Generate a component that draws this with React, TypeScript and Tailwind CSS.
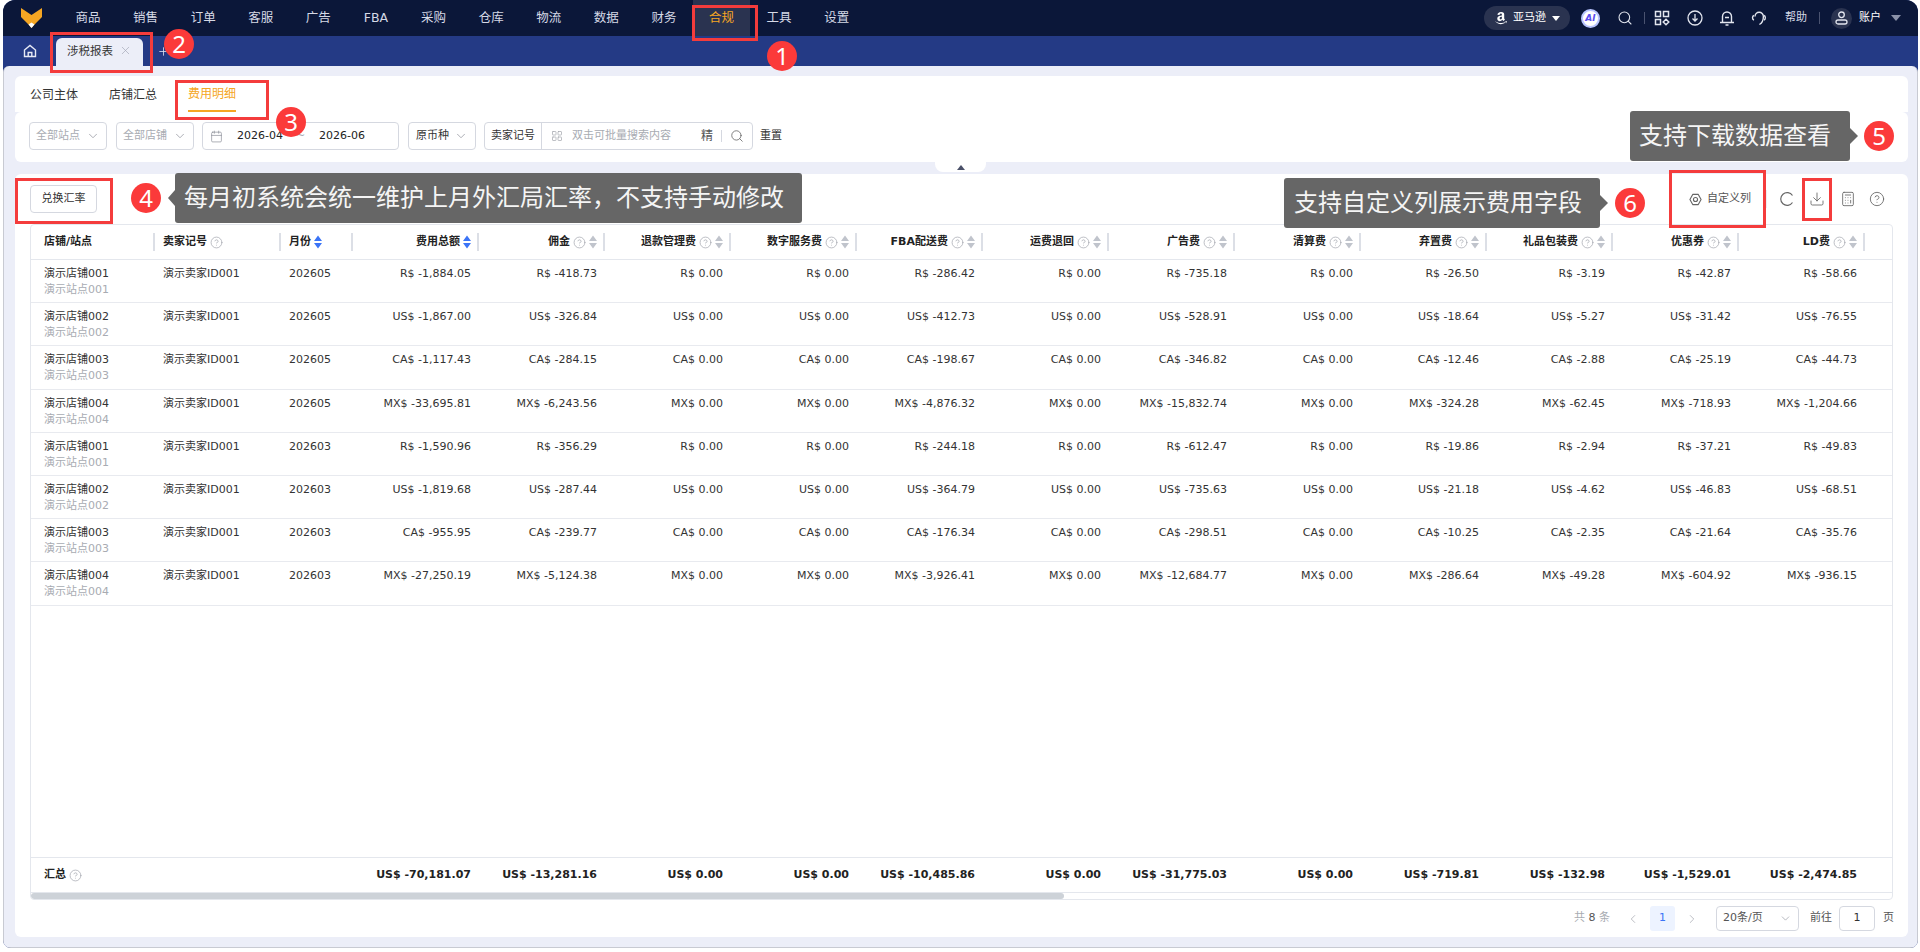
import React from "react";
import { CircleHelp, Download, Calculator, Search, ChevronDown, ChevronLeft, ChevronRight, Calendar, X, Plus, LayoutGrid } from "lucide-react";
import { FaAmazon } from "react-icons/fa";

const navItems = ["商品", "销售", "订单", "客服", "广告", "FBA", "采购", "仓库", "物流", "数据", "财务", "合规", "工具", "设置"];
const headers: [string, boolean][] = [
  ["费用总额", false], ["佣金", true], ["退款管理费", true], ["数字服务费", true], ["FBA配送费", true], ["运费退回", true],
  ["广告费", true], ["清算费", true], ["弃置费", true], ["礼品包装费", true], ["优惠券", true], ["LD费", true],
];
type Row = { store: string; site: string; month: string; cur: string; v: string[] };
const rows: Row[] = [
  { store: "演示店铺001", site: "演示站点001", month: "202605", cur: "R$", v: ["-1,884.05", "-418.73", "0.00", "0.00", "-286.42", "0.00", "-735.18", "0.00", "-26.50", "-3.19", "-42.87", "-58.66"] },
  { store: "演示店铺002", site: "演示站点002", month: "202605", cur: "US$", v: ["-1,867.00", "-326.84", "0.00", "0.00", "-412.73", "0.00", "-528.91", "0.00", "-18.64", "-5.27", "-31.42", "-76.55"] },
  { store: "演示店铺003", site: "演示站点003", month: "202605", cur: "CA$", v: ["-1,117.43", "-284.15", "0.00", "0.00", "-198.67", "0.00", "-346.82", "0.00", "-12.46", "-2.88", "-25.19", "-44.73"] },
  { store: "演示店铺004", site: "演示站点004", month: "202605", cur: "MX$", v: ["-33,695.81", "-6,243.56", "0.00", "0.00", "-4,876.32", "0.00", "-15,832.74", "0.00", "-324.28", "-62.45", "-718.93", "-1,204.66"] },
  { store: "演示店铺001", site: "演示站点001", month: "202603", cur: "R$", v: ["-1,590.96", "-356.29", "0.00", "0.00", "-244.18", "0.00", "-612.47", "0.00", "-19.86", "-2.94", "-37.21", "-49.83"] },
  { store: "演示店铺002", site: "演示站点002", month: "202603", cur: "US$", v: ["-1,819.68", "-287.44", "0.00", "0.00", "-364.79", "0.00", "-735.63", "0.00", "-21.18", "-4.62", "-46.83", "-68.51"] },
  { store: "演示店铺003", site: "演示站点003", month: "202603", cur: "CA$", v: ["-955.95", "-239.77", "0.00", "0.00", "-176.34", "0.00", "-298.51", "0.00", "-10.25", "-2.35", "-21.64", "-35.76"] },
  { store: "演示店铺004", site: "演示站点004", month: "202603", cur: "MX$", v: ["-27,250.19", "-5,124.38", "0.00", "0.00", "-3,926.41", "0.00", "-12,684.77", "0.00", "-286.64", "-49.28", "-604.92", "-936.15"] },
];
const totals = ["-70,181.07", "-13,281.16", "0.00", "0.00", "-10,485.86", "0.00", "-31,775.03", "0.00", "-719.81", "-132.98", "-1,529.01", "-2,474.85"];

function Sort({ active }: { active?: boolean }) {
  const c = active ? "#3b74f6" : "#c0c4cc";
  return (
    <svg width="8" height="14" viewBox="0 0 8 14" className="shrink-0">
      <path d="M4 0.5 L8 6 H0 Z M4 13.5 L0 8 H8 Z" fill={c} />
    </svg>
  );
}
function Q({ size = 13 }: { size?: number }) {
  return <CircleHelp size={size} strokeWidth={1.4} className="shrink-0 text-[#a8abb2]" />;
}
function Fox() {
  return (
    <svg width="21" height="20" viewBox="0 0 21 20">
      <path d="M0 0 L10.5 7 L21 0 V9 L14 16 L10.5 20 L7 16 L0 9 Z" fill="#f5a623" />
      <path d="M7.5 16.5 L10.5 14.5 L13.5 16.5 L10.5 20 Z" fill="#ffffff" />
    </svg>
  );
}
function Badge({ n, className }: { n: number; className: string }) {
  return (
    <div className={"absolute flex h-[30px] w-[30px] items-center justify-center rounded-full bg-[#fb3a3a] font-['Noto_Sans'] text-[24px] leading-none text-white " + className}>{n}</div>
  );
}

export default function App() {
  return (
    <div
      className="relative h-[952px] w-[1920px] overflow-hidden bg-white pb-[4px] pl-[3px] pr-[2px] text-[11px] text-[#333]"
      style={{ fontFamily: '"DejaVu Sans", "Noto Sans CJK SC", sans-serif' }}
    >
      <div className="flex h-full flex-col overflow-hidden rounded-b-[8px] rounded-t-[12px] bg-[#243a85]">
        {/* nav */}
        <div className="flex h-9 shrink-0 items-center bg-[#0b1739] text-[12.5px] text-[#d5d9e6]">
          <div className="ml-[18px] mr-[17.2px] flex w-[21px] items-center"><Fox /></div>
          {navItems.map((n) => (
            <div
              key={n}
              className={"flex h-9 w-[57.6px] items-center justify-center " + (n === "合规" ? "bg-[#2a3350] text-[#f5a623]" : "")}
            >
              {n}
            </div>
          ))}
          <div className="ml-auto flex items-center pr-[17px]">
            <div className="flex h-6 w-[86px] items-center rounded-full bg-[#2a3350] pl-[10px] text-[11px] text-white">
              <FaAmazon size={14} className="mr-[5px]" />
              <span>亚马逊</span>
              <span className="ml-[6px] h-0 w-0 border-x-[4px] border-t-[5px] border-x-transparent border-t-white" />
            </div>
            <div className="ml-[11px] flex h-[19px] w-[19px] items-center justify-center rounded-full border-2 border-[#b8c4ff] bg-white text-[9px] font-bold italic leading-none text-[#5b4df0]">AI</div>
            <Search size={16} strokeWidth={1.6} className="ml-[17px] text-[#e2e5ee]" />
            <span className="ml-[11px] h-[12px] w-px bg-[#4a5370]" />
            <svg width="16" height="16" viewBox="0 0 16 16" fill="none" stroke="#e2e5ee" strokeWidth="1.5" className="ml-[9px]">
              <rect x="1.5" y="1.5" width="5" height="5" />
              <rect x="9.5" y="1.5" width="5" height="5" />
              <rect x="1.5" y="9.5" width="5" height="5" />
              <path d="M12 9.2 14.8 12 12 14.8 9.2 12Z" />
            </svg>
            <svg width="16" height="16" viewBox="0 0 16 16" fill="none" stroke="#e2e5ee" strokeWidth="1.3" className="ml-[17px]">
              <circle cx="8" cy="8" r="7" />
              <path d="M8 4v7M5.5 8.5 8 11l2.5-2.5" />
            </svg>
            <svg width="16" height="16" viewBox="0 0 16 16" fill="none" stroke="#e2e5ee" strokeWidth="1.4" className="ml-[16px]">
              <path d="M3.5 12V6.5a4.5 4.5 0 0 1 9 0V12" />
              <path d="M1 12.5h14M6.5 15h3M6 7.5h4" />
            </svg>
            <svg width="16" height="16" viewBox="0 0 16 16" fill="none" stroke="#e2e5ee" strokeWidth="1.4" className="ml-[16px]">
              <path d="M4 6.5a4.2 4.2 0 0 1 8.4 0c0 3.5-1.2 6.5-4 8" />
              <path d="M3 5.5c-2 .6-2 4 0 4.6M13 5.5c1.8.6 1.8 4 0 4.6" />
            </svg>
            <span className="ml-[18px] text-[11px] text-[#d5d9e6]">帮助</span>
            <span className="ml-[12px] h-[12px] w-px bg-[#4a5370]" />
            <div className="ml-[11px] flex h-[21px] w-[21px] items-center justify-center rounded-full bg-[#2a3350]">
              <svg width="13" height="14" viewBox="0 0 13 14" fill="none" stroke="#e2e5ee" strokeWidth="1.3">
                <circle cx="6.5" cy="3.8" r="2.8" />
                <rect x="1" y="9" width="11" height="4" rx="2" />
              </svg>
            </div>
            <span className="ml-[7px] text-[11px] text-white">账户</span>
            <span className="ml-[10px] h-0 w-0 border-x-[5px] border-t-[6px] border-x-transparent border-t-[#8a91a8]" />
          </div>
        </div>

        {/* tabs */}
        <div className="flex h-[30px] shrink-0 items-end text-white">
          <div className="ml-[20px] flex h-full w-[14px] items-center">
            <svg width="14" height="14" viewBox="0 0 14 14" fill="none" stroke="#e6e9f5" strokeWidth="1.4">
              <path d="M1.5 6 7 1.5 12.5 6V12.5H1.5Z" />
              <path d="M5.2 12.5V8.5H8.8V12.5" />
            </svg>
          </div>
          <div className="ml-[19px] flex h-[28px] w-[87px] items-center rounded-t-[6px] bg-[#eceef8] pl-[11px] text-[11.5px] text-[#333]">
            涉税报表
            <X size={13} strokeWidth={1.2} className="mb-[4px] ml-[6px] text-[#a0a4b4]" />
          </div>
          <div className="ml-[14px] flex h-full items-center"><Plus size={13} strokeWidth={1.5} className="text-[#dfe3f2]" /></div>
        </div>

        {/* content */}
        <div className="flex min-h-0 flex-1 flex-col rounded-t-[6px] border-x border-b border-[#c8cad2] bg-[#eceef8] pb-[10px] pl-[11px] pr-[9px] pt-[10px]">
          {/* filter card */}
          <div className="h-[86px] shrink-0">
            <div className="flex h-[36px] gap-[31px] rounded-t-[6px] bg-white pl-[15px] text-[12px]">
              <div className="flex h-full items-center pt-[2px]">公司主体</div>
              <div className="flex h-full items-center pt-[2px]">店铺汇总</div>
              <div className="flex h-full items-center border-b-2 border-[#f5a623] pt-[2px] text-[#f5a623]">费用明细</div>
            </div>
            <div className="flex h-[50px] items-start rounded-[6px] bg-white pl-[14px] pt-[10px]">
              {["全部站点", "全部店铺"].map((t, i) => (
                <div key={t} className={"flex h-[28px] w-[78px] items-center justify-between rounded-[4px] border border-[#d5d8e0] px-[6px] text-[#a8abb2] " + (i === 1 ? "ml-[9px]" : "")}>
                  {t}<ChevronDown size={14} strokeWidth={1.4} className="text-[#9a9da6]" />
                </div>
              ))}
              <div className="ml-[8px] flex h-[28px] w-[197px] items-center rounded-[4px] border border-[#d5d8e0] pl-[7px]">
                <Calendar size={13} strokeWidth={1.3} className="text-[#8c8f98]" />
                <span className="ml-[14px] text-[#222]">2026-04</span>
                <span className="ml-[13px] w-[9px] text-[#a8abb2]">~</span>
                <span className="ml-[14px] text-[#222]">2026-06</span>
              </div>
              <div className="ml-[9px] flex h-[28px] w-[68px] items-center justify-between rounded-[4px] border border-[#d5d8e0] px-[7px]">
                原币种<ChevronDown size={14} strokeWidth={1.4} className="text-[#9a9da6]" />
              </div>
              <div className="ml-[8px] flex h-[28px] w-[269px] items-center rounded-[4px] border border-[#d5d8e0]">
                <div className="flex h-full w-[57px] items-center justify-center border-r border-[#d5d8e0]">卖家记号</div>
                <LayoutGrid size={12} strokeWidth={1.5} className="ml-[9px] text-[#a8abb2]" />
                <span className="ml-[9px] text-[#a8abb2]">双击可批量搜索内容</span>
                <span className="ml-auto text-[12px] text-[#555]">精</span>
                <span className="ml-[8px] h-[12px] w-px bg-[#d5d8e0]" />
                <Search size={14} strokeWidth={1.4} className="mx-[8px] text-[#666]" />
              </div>
              <div className="ml-[7px] flex h-[28px] items-center">重置</div>
            </div>
          </div>

          {/* main card */}
          <div className="mt-[12px] flex min-h-0 flex-1 flex-col rounded-[6px] bg-white px-[15px]">
            <div className="flex h-[50px] shrink-0 items-center">
              <div className="flex h-[28px] w-[67px] items-center justify-center rounded-[4px] border border-[#d5d8e0]">兑换汇率</div>
              <div className="ml-auto flex items-center pr-[8px] text-[#555]">
                <svg width="13" height="13" viewBox="0 0 14 14" fill="none" stroke="#666" strokeWidth="1.2">
                  <path d="M4 1.5h6L13 7l-3 5.5H4L1 7Z" strokeLinejoin="round" />
                  <circle cx="7" cy="7" r="2.2" />
                </svg>
                <span className="ml-[5px]">自定义列</span>
                <span className="ml-[15px] h-[18px] w-px bg-[#eceef2]" />
                <svg width="16" height="16" viewBox="0 0 16 16" fill="none" stroke="#666" strokeWidth="1.2" className="ml-[12px]">
                  <path d="M13.5 4.5A6.4 6.4 0 1 0 13.5 11.5" />
                </svg>
                <Download size={16} strokeWidth={1.3} className="ml-[14px] text-[#666]" />
                <Calculator size={16} strokeWidth={1.3} className="ml-[15px] text-[#666]" />
                <CircleHelp size={16} strokeWidth={1.3} className="ml-[13px] text-[#666]" />
              </div>
            </div>

            <div className="flex h-[676px] shrink-0 flex-col overflow-hidden rounded-[4px] border border-[#e4e7ed]">
              {/* header */}
              <div className="flex h-[35px] shrink-0 items-center border-b border-[#e4e7ed] font-bold text-[#222]">
                <div className="flex w-[124px] shrink-0 items-center"><div className="flex h-[18px] w-full items-center border-r-2 border-[#dcdfe6] pl-[13px]">店铺/站点</div></div>
                <div className="w-[126px] shrink-0"><div className="flex h-[18px] items-center gap-[3px] border-r-2 border-[#dcdfe6] pl-[8px]">卖家记号<Q /></div></div>
                <div className="w-[72px] shrink-0"><div className="flex h-[18px] items-center gap-[3px] border-r-2 border-[#dcdfe6] pl-[8px]">月份<Sort active /></div></div>
                {headers.map(([h, q], i) => (
                  <div key={h} className="w-[126px] shrink-0">
                    <div className="flex h-[18px] items-center justify-end gap-[3px] border-r-2 border-[#dcdfe6] pr-[6px]">
                      {h}
                      {q && <Q />}
                      <Sort active={i === 0} />
                    </div>
                  </div>
                ))}
              </div>
              {/* rows */}
              {rows.map((r, ri) => (
                <div key={ri} className="flex h-[43.2px] shrink-0 border-b border-[#e8eaef] pt-[6px] leading-[16px]">
                  <div className="w-[124px] shrink-0 pl-[13px]">
                    <div>{r.store}</div>
                    <div className="text-[#a8abb2]">{r.site}</div>
                  </div>
                  <div className="w-[126px] shrink-0 pl-[8px]">演示卖家ID001</div>
                  <div className="w-[72px] shrink-0 pl-[8px]">{r.month}</div>
                  {r.v.map((v, i) => (
                    <div key={i} className="w-[126px] shrink-0 pr-[8px] text-right">{r.cur} {v}</div>
                  ))}
                </div>
              ))}
              <div className="flex-1" />
              {/* totals */}
              <div className="flex h-[36px] shrink-0 items-center border-y border-[#e4e7ed] font-bold text-[#222]">
                <div className="flex w-[124px] shrink-0 items-center gap-[3px] pl-[13px]">汇总<Q /></div>
                <div className="w-[126px] shrink-0" />
                <div className="w-[72px] shrink-0" />
                {totals.map((v, i) => (
                  <div key={i} className="w-[126px] shrink-0 pr-[8px] text-right">US$ {v}</div>
                ))}
              </div>
              {/* scrollbar */}
              <div className="h-[6px] shrink-0">
                <div className="h-full w-[1033px] rounded-full bg-[#cdd2d8]" />
              </div>
            </div>

            {/* pagination */}
            <div className="flex h-[37px] shrink-0 items-center justify-end text-[#555]">
              <span className="text-[#a8abb2]">共 <span className="text-[#555]">8</span> 条</span>
              <ChevronLeft size={14} strokeWidth={1.3} className="ml-[16px] text-[#a8abb2]" />
              <div className="ml-[10px] flex h-[25px] w-[25px] items-center justify-center rounded-[3px] bg-[#edf3ff] text-[#3b74f6]">1</div>
              <ChevronRight size={14} strokeWidth={1.3} className="ml-[10px] text-[#a8abb2]" />
              <div className="ml-[17px] flex h-[25px] w-[83px] items-center justify-between rounded-[4px] border border-[#d5d8e0] px-[6px]">
                20条/页<ChevronDown size={13} strokeWidth={1.3} className="text-[#9a9da6]" />
              </div>
              <span className="ml-[11px]">前往</span>
              <div className="ml-[7px] flex h-[25px] w-[36px] items-center justify-center rounded-[4px] border border-[#d5d8e0] text-[#333]">1</div>
              <span className="ml-[8px] mr-[-1px]">页</span>
            </div>
          </div>
        </div>
      </div>

      {/* collapse handle */}
      <div className="absolute left-[935px] top-[162px] flex h-[10px] w-[51px] justify-center rounded-b-[8px] bg-white pt-[3px]">
        <span className="h-0 w-0 border-x-[4px] border-b-[5px] border-x-transparent border-b-[#4a5068]" />
      </div>

      {/* annotations */}
      <div className="absolute left-[692px] top-[5px] h-[36px] w-[66px] border-[3px] border-[#f43c3c]" />
      <div className="absolute left-[50px] top-[32px] h-[41px] w-[103px] border-[3px] border-[#f43c3c]" />
      <div className="absolute left-[175px] top-[80px] h-[40px] w-[94px] border-[3px] border-[#f43c3c]" />
      <div className="absolute left-[15px] top-[178px] h-[46px] w-[98px] border-[3px] border-[#f43c3c]" />
      <div className="absolute left-[1669px] top-[170px] h-[58px] w-[97px] border-[3px] border-[#f43c3c]" />
      <div className="absolute left-[1802px] top-[178px] h-[43px] w-[30px] border-[3px] border-[#f43c3c]" />

      <Badge n={1} className="left-[767px] top-[41px]" />
      <Badge n={2} className="left-[164px] top-[29px]" />
      <Badge n={3} className="left-[276px] top-[107px]" />
      <Badge n={4} className="left-[131px] top-[183px]" />
      <Badge n={5} className="left-[1864px] top-[121px]" />
      <Badge n={6} className="left-[1615px] top-[188px]" />

      <div className="absolute left-[175px] top-[173px] flex h-[50px] w-[627px] items-center whitespace-nowrap rounded-[3px] bg-[#666] pl-[9px] text-[24px] text-[#f5f5f5]">
        每月初系统会统一维护上月外汇局汇率，不支持手动修改
      </div>
      <div className="absolute left-[168px] top-[190px] h-0 w-0 border-y-[8px] border-r-[7px] border-y-transparent border-r-[#666]" />

      <div className="absolute left-[1630px] top-[111px] flex h-[50px] w-[220px] items-center whitespace-nowrap rounded-[3px] bg-[#666] pl-[9px] text-[24px] text-[#f5f5f5]">
        支持下载数据查看
      </div>
      <div className="absolute left-[1850px] top-[128px] h-0 w-0 border-y-[8px] border-l-[8px] border-y-transparent border-l-[#666]" />

      <div className="absolute left-[1284px] top-[178px] flex h-[50px] w-[316px] items-center whitespace-nowrap rounded-[3px] bg-[#666] pl-[10px] text-[24px] text-[#f5f5f5]">
        支持自定义列展示费用字段
      </div>
      <div className="absolute left-[1600px] top-[195px] h-0 w-0 border-y-[8px] border-l-[8px] border-y-transparent border-l-[#666]" />
    </div>
  );
}
